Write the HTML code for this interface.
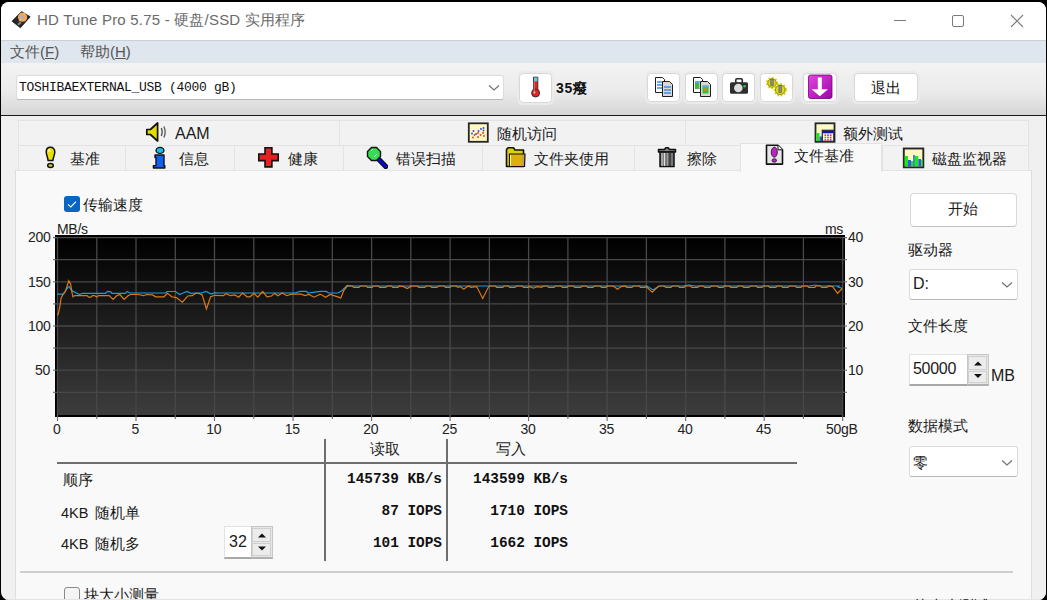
<!DOCTYPE html>
<html><head><meta charset="utf-8">
<style>
*{margin:0;padding:0;box-sizing:border-box}
html,body{width:1047px;height:600px;overflow:hidden;background:#000;font-family:"Liberation Sans",sans-serif}
.a{position:absolute}
#win{position:absolute;left:1px;top:2px;width:1045px;height:598px;background:#f0f0f0;border-radius:8px;overflow:hidden}
#in{position:absolute;left:-1px;top:-2px;width:1047px;height:600px}
.t{position:absolute;white-space:nowrap;font-size:15px;color:#1a1a1a;line-height:1}
.btn{position:absolute;background:#fff;border:1px solid #d8d8d8;border-radius:4px;box-shadow:0 0 0 2px #ebebeb}
.tab{position:absolute;background:#f2f2f2;border:1px solid #e3e3e3}
.combo{position:absolute;background:#fff;border:1px solid #dcdcdc;border-bottom-color:#b8b8b8;border-radius:3px}
.mono{position:absolute;white-space:nowrap;font-family:"Liberation Mono",monospace;font-weight:bold;font-size:14.4px;color:#111;line-height:1;text-align:right}
.ax{position:absolute;white-space:nowrap;font-size:14px;letter-spacing:-0.3px;color:#222;line-height:1}
</style></head><body>
<div id="win"><div id="in">
 <!-- title bar -->
 <div class="a" style="left:0;top:0;width:1047px;height:40px;background:#fff"></div>
 <svg class="a" style="left:11px;top:10px" width="21" height="20" viewBox="0 0 21 20">
  <path d="M10.6 1.6 L19.2 6.8 L9.4 17.8 L1 11.2 Z" fill="#262626" stroke="#1a1a1a" stroke-width="0.8" stroke-linejoin="round"/>
  <circle cx="11.6" cy="7.2" r="4.6" fill="#f0a85a"/>
  <circle cx="11.3" cy="7.4" r="1.6" fill="#a8b0c8"/>
  <path d="M8 11.5 L10.5 8.5" stroke="#ccc" stroke-width="1"/>
  <rect x="6.5" y="12.5" width="4" height="2" fill="#888" transform="rotate(-40 8.5 13.5)"/>
 </svg>
 <div class="t" style="left:37px;top:12px;font-size:15px;color:#6a6a6a;letter-spacing:0.2px">HD Tune Pro 5.75 - 硬盘/SSD 实用程序</div>
 <div class="a" style="left:894px;top:20px;width:12px;height:1px;background:#7a7a7a"></div>
 <div class="a" style="left:952px;top:15px;width:12px;height:12px;border:1px solid #7a7a7a;border-radius:2px"></div>
 <svg class="a" style="left:1010px;top:14px" width="14" height="14"><path d="M1 1L13 13M13 1L1 13" stroke="#7a7a7a" stroke-width="1.1"/></svg>
 <!-- menu -->
 <div class="a" style="left:0;top:40px;width:1047px;height:23px;background:#dfe6ee;border-top:1px solid #c8d0da"></div>
 <div class="t" style="left:10px;top:44px;color:#555">文件(<u>F</u>)</div>
 <div class="t" style="left:80px;top:44px;color:#555">帮助(<u>H</u>)</div>
 <!-- toolbar -->
 <div class="a" style="left:0;top:63px;width:1047px;height:52px;background:linear-gradient(#f3f3f3,#ebebeb 55%,#d6d6d6)"></div>
 <div class="a" style="left:0;top:115px;width:1047px;height:1px;background:#1c1c1c"></div>
 <div class="combo" style="left:16px;top:75px;width:488px;height:25px"></div>
 <div class="t" style="left:19px;top:81px;font-family:'Liberation Mono',monospace;font-size:13px;color:#111;letter-spacing:-0.3px">TOSHIBAEXTERNAL_USB (4000 gB)</div>
 <svg class="a" style="left:488px;top:84px" width="12" height="8"><path d="M1 1.5L6 6L11 1.5" stroke="#707070" fill="none" stroke-width="1.1"/></svg>
 <div class="btn" style="left:519px;top:73px;width:33px;height:30px"></div>
 <svg class="a" style="left:527px;top:75px" width="16" height="24" viewBox="0 0 16 24">
  <path d="M6.5 2.2h4.3v13.5h-4.3z" fill="#e02424" stroke="#2a2a2a" stroke-width="0.9"/>
  <rect x="7" y="2.6" width="3.4" height="3.8" fill="#5ad0f0"/>
  <circle cx="8.6" cy="18" r="4" fill="#e02424" stroke="#2a2a2a" stroke-width="0.9"/>
  <path d="M7.2 6.5v10" stroke="#ff8080" stroke-width="0.8"/>
  <circle cx="7.4" cy="17.6" r="1" fill="#ffd0d0"/>
 </svg>
 <div class="t" style="left:556px;top:81px;font-weight:bold;font-size:14px;color:#111;letter-spacing:0.8px">35癈</div>
 <div class="btn" style="left:647px;top:73px;width:33px;height:29px"></div>
 <div class="btn" style="left:685px;top:73px;width:33px;height:29px"></div>
 <div class="btn" style="left:722px;top:73px;width:33px;height:29px"></div>
 <div class="btn" style="left:760px;top:73px;width:33px;height:29px"></div>
 <div class="btn" style="left:803px;top:73px;width:34px;height:29px"></div>
 <div class="btn" style="left:854px;top:73px;width:64px;height:29px"></div>
 <div class="t" style="left:871px;top:80px;color:#111">退出</div>
 <svg class="a" style="left:654px;top:76px" width="22" height="22" viewBox="0 0 22 22">
  <path d="M1.5 1.5h7l2 2v13h-9z" fill="#fff" stroke="#1e1e1e"/><path d="M3 6h5M3 9h5M3 12h5" stroke="#3a8ee6" stroke-width="1.3"/>
  <path d="M8.5 5.5h7l3 3v12h-10z" fill="#d8d8d8" stroke="#1e1e1e"/><path d="M10 11h7M10 14h7M10 17h7" stroke="#3a8ee6" stroke-width="1.3"/>
 </svg>
 <svg class="a" style="left:692px;top:76px" width="22" height="22" viewBox="0 0 22 22">
  <path d="M1.5 1.5h7l2 2v13h-9z" fill="#fff" stroke="#1e1e1e"/><rect x="3" y="5" width="4.5" height="8" fill="#3dbb3d"/><rect x="3" y="5" width="4.5" height="2" fill="#55aaff"/>
  <path d="M8.5 5.5h7l3 3v12h-10z" fill="#d8d8d8" stroke="#1e1e1e"/><rect x="10.5" y="9.5" width="6" height="8" fill="#3dbb3d"/><rect x="10.5" y="9.5" width="6" height="2" fill="#55aaff"/><circle cx="13.5" cy="13.5" r="1.6" fill="#e88a00"/>
 </svg>
 <svg class="a" style="left:728px;top:77px" width="22" height="19" viewBox="0 0 22 19">
  <rect x="7.8" y="1.8" width="6.5" height="4.5" rx="1.2" fill="none" stroke="#2a2a2a" stroke-width="1.6"/>
  <rect x="2" y="5.3" width="18" height="11.5" rx="1.5" fill="#2e2e2e"/>
  <circle cx="10.3" cy="11" r="4.3" fill="#dcdcdc"/><circle cx="16.6" cy="9.3" r="1.3" fill="#22cc44"/>
 </svg>
 <svg class="a" style="left:764px;top:75px" width="24" height="24" viewBox="0 0 24 24">
  <circle cx="8" cy="8" r="4.6" fill="#d8d400" stroke="#d8d400" stroke-width="3" stroke-dasharray="1.6 1.4"/>
  <circle cx="8" cy="8" r="4.2" fill="#e0dc10" stroke="#7a7420" stroke-width="0.7"/>
  <circle cx="16.2" cy="14.8" r="5.2" fill="#d8d400" stroke="#d8d400" stroke-width="3" stroke-dasharray="1.6 1.4"/>
  <circle cx="16.2" cy="14.8" r="4.8" fill="#e0dc10" stroke="#7a7420" stroke-width="0.7"/>
  <path d="M6.6 4h2.8v6.5h-2.8z" fill="#8a8a8a" stroke="#555" stroke-width="0.5"/>
  <path d="M14.8 10.5h2.8v7h-2.8z" fill="#8a8a8a" stroke="#555" stroke-width="0.5"/>
 </svg>
 <svg class="a" style="left:807px;top:74px" width="26" height="26" viewBox="0 0 26 26">
  <defs><linearGradient id="pg" x1="0" y1="0" x2="1" y2="1"><stop offset="0" stop-color="#e048e0"/><stop offset="1" stop-color="#a000a8"/></linearGradient></defs>
  <rect x="1.5" y="1" width="23.5" height="23.5" rx="2" fill="url(#pg)" stroke="#7a007a" stroke-width="0.8"/>
  <path d="M12.8 3.5v12" stroke="#fff" stroke-width="4"/>
  <path d="M4.6 15.2h16.4l-8.2 7z" fill="#fff"/>
 </svg>

 <!-- tabs area -->
 <div class="a" style="left:15px;top:170px;width:1017px;height:440px;background:#f9f9f9;border:1px solid #dedede"></div>
 <div class="tab" style="left:18px;top:120px;width:322px;height:26px"></div>
 <div class="tab" style="left:339px;top:120px;width:347px;height:26px"></div>
 <div class="tab" style="left:685px;top:120px;width:344px;height:26px"></div>
 <div class="tab" style="left:18px;top:145px;width:108px;height:26px"></div>
 <div class="tab" style="left:125px;top:145px;width:110px;height:26px"></div>
 <div class="tab" style="left:234px;top:145px;width:110px;height:26px"></div>
 <div class="tab" style="left:343px;top:145px;width:140px;height:26px"></div>
 <div class="tab" style="left:482px;top:145px;width:153px;height:26px"></div>
 <div class="tab" style="left:634px;top:145px;width:107px;height:26px"></div>
 <div class="tab" style="left:882px;top:145px;width:147px;height:26px"></div>
 <div class="a" style="left:740px;top:143px;width:142px;height:29px;background:#f9f9f9;border:1px solid #e2e2e2;border-bottom:none"></div>

 <div class="t" style="left:175px;top:126px;font-size:16px">AAM</div>
 <div class="t" style="left:497px;top:126px">随机访问</div>
 <div class="t" style="left:843px;top:126px">额外测试</div>
 <div class="t" style="left:70px;top:151px">基准</div>
 <div class="t" style="left:179px;top:151px">信息</div>
 <div class="t" style="left:288px;top:151px">健康</div>
 <div class="t" style="left:396px;top:151px">错误扫描</div>
 <div class="t" style="left:534px;top:151px">文件夹使用</div>
 <div class="t" style="left:687px;top:151px">擦除</div>
 <div class="t" style="left:794px;top:148px">文件基准</div>
 <div class="t" style="left:932px;top:151px">磁盘监视器</div>

 <!-- tab icons -->
 <svg class="a" style="left:145px;top:121px" width="23" height="22" viewBox="0 0 23 22">
  <path d="M1.8 8.5h3.6l7.2-6.5v18l-7.2-6.5H1.8z" fill="#e6dc00" stroke="#111" stroke-width="1.7" stroke-linejoin="round"/>
  <path d="M16.3 7q1.8 4 0 8M18.8 5.5q2.8 5.5 0 11" stroke="#555" stroke-width="1.3" fill="none"/>
 </svg>
 <svg class="a" style="left:467px;top:122px" width="22" height="21" viewBox="0 0 22 21">
  <rect x="1.8" y="1.3" width="19" height="18.5" fill="#fff8c0" stroke="#262626" stroke-width="1.8"/>
  <circle cx="7.5" cy="13" r="1" fill="#f04030"/><circle cx="6" cy="15.5" r="1" fill="#f04030"/><circle cx="11" cy="15" r="1" fill="#f04030"/><circle cx="13.5" cy="13" r="1" fill="#f04030"/><circle cx="16" cy="11" r="1" fill="#f04030"/><circle cx="17" cy="14" r="1" fill="#f04030"/><circle cx="11" cy="11" r="1" fill="#f04030"/>
  <circle cx="5" cy="11.5" r="1" fill="#3050f0"/><circle cx="6.5" cy="9" r="1" fill="#3050f0"/><circle cx="9" cy="12" r="1" fill="#3050f0"/><circle cx="11.5" cy="9" r="1" fill="#3050f0"/><circle cx="14" cy="7" r="1" fill="#3050f0"/><circle cx="16.5" cy="6" r="1" fill="#3050f0"/><circle cx="16.5" cy="8.5" r="1" fill="#3050f0"/>
 </svg>
 <svg class="a" style="left:814px;top:122px" width="22" height="21" viewBox="0 0 22 21">
  <rect x="1.5" y="1.3" width="19" height="18.5" fill="#fff8c8" stroke="#262626" stroke-width="1.8"/>
  <rect x="2.5" y="11" width="3" height="8" fill="#10ee10"/><rect x="5.5" y="14.5" width="3" height="4.5" fill="#4050e8"/>
  <rect x="8.3" y="8.3" width="11.5" height="11" fill="#f8f8f0" stroke="#222" stroke-width="1.2"/>
  <rect x="9" y="9" width="10.5" height="2.3" fill="#1010c8"/>
  <circle cx="11.3" cy="13.2" r="0.9" fill="#f03030"/><circle cx="14" cy="13.2" r="0.9" fill="#3050f0"/><circle cx="16.7" cy="13.2" r="0.9" fill="#f03030"/>
  <circle cx="11.3" cy="15.5" r="0.9" fill="#30c030"/><circle cx="14" cy="15.5" r="0.9" fill="#f03030"/><circle cx="16.7" cy="15.5" r="0.9" fill="#f03030"/>
  <circle cx="11.3" cy="17.8" r="0.9" fill="#f03030"/><circle cx="14" cy="17.8" r="0.9" fill="#f03030"/><circle cx="16.7" cy="17.8" r="0.9" fill="#3050f0"/>
 </svg>
 <svg class="a" style="left:45px;top:146px" width="12" height="23" viewBox="0 0 12 23">
  <path d="M5.5 1.3C3 1.3 1.2 3 1.2 6C1.2 8.5 2.6 10.5 3.1 14.4h4.8C8.4 10.5 9.8 8.5 9.8 6C9.8 3 8 1.3 5.5 1.3z" fill="#e8e000" stroke="#111" stroke-width="1.5"/>
  <ellipse cx="5.5" cy="19.5" rx="2.8" ry="2" fill="#d8d000" stroke="#111" stroke-width="1.5"/>
  <ellipse cx="4.2" cy="4.5" rx="1.2" ry="1.6" fill="#fffaa0"/>
 </svg>
 <svg class="a" style="left:152px;top:146px" width="14" height="23" viewBox="0 0 14 23">
  <ellipse cx="8" cy="4.4" rx="3.9" ry="3" fill="#10c0f0" stroke="#111" stroke-width="1.4"/>
  <path d="M3 9H12V19.6H12.8V22H1.4V19.6H4V11.5H3Z" fill="#1060f0" stroke="#111" stroke-width="1.4" stroke-linejoin="round"/>
 </svg>
 <svg class="a" style="left:258px;top:147px" width="22" height="21" viewBox="0 0 22 21">
  <path d="M7 0.8H13.9V7H20.2V13.6H13.9V19.9H7V13.6H0.8V7H7Z" fill="#e42222" stroke="#111" stroke-width="1.6"/>
 </svg>
 <svg class="a" style="left:366px;top:146px" width="22" height="23" viewBox="0 0 22 23">
  <path d="M12.5 13l7.2 7.5" stroke="#111" stroke-width="5.2" stroke-linecap="round"/>
  <path d="M12.5 13l7.2 7.5" stroke="#0a0ad0" stroke-width="3" stroke-linecap="round"/>
  <path d="M5.5 1.5h5l4 4v5l-4 4h-5l-4-4v-5z" fill="#36dd50" stroke="#111" stroke-width="1.4"/>
  <path d="M5 5l2-2M8 11l3-3" stroke="#b8ffc0" stroke-width="1"/>
 </svg>
 <svg class="a" style="left:505px;top:146px" width="22" height="23" viewBox="0 0 22 23">
  <path d="M1.5 3.5L3 1.8h5.5L10 4h8.5v16.5H1.5z" fill="#e0d000" stroke="#111" stroke-width="1.6" stroke-linejoin="round"/>
  <path d="M4.5 8h15.5l-0.5 12.5H4.5z" fill="#dcae10" stroke="#111" stroke-width="1.2"/>
  <path d="M5.5 9v11" stroke="#fff6a0" stroke-width="1"/><path d="M17.8 9v11" stroke="#9a9a9a" stroke-width="0.8"/>
 </svg>
 <svg class="a" style="left:657px;top:146px" width="20" height="23" viewBox="0 0 20 23">
  <path d="M1.5 3.5h6l1.3-1.8h2.4l1.3 1.8h6v2.5h-17z" fill="#888" stroke="#111" stroke-width="1.5" stroke-linejoin="round"/>
  <path d="M3 6h14v14.5H3z" fill="#6a6a6a" stroke="#111" stroke-width="1.5"/>
  <path d="M5 7v13" stroke="#c8c8c8" stroke-width="1.2"/><path d="M7.5 7v13" stroke="#e0e0e0" stroke-width="1.4"/><path d="M10.3 7v13" stroke="#a8a8a8" stroke-width="1"/><path d="M13 7v13" stroke="#2a2a2a" stroke-width="1.2"/><path d="M15 7v13" stroke="#888" stroke-width="1"/>
 </svg>
 <svg class="a" style="left:765px;top:144px" width="20" height="22" viewBox="0 0 20 22">
  <path d="M1.5 1.3h11.5l4.5 4.5v14.3H1.5z" fill="#e6e6e6" stroke="#111" stroke-width="1.6" stroke-linejoin="round"/>
  <path d="M13 1.3v4.5h4.5" fill="#fff" stroke="#111" stroke-width="1"/>
  <ellipse cx="9.3" cy="8.2" rx="3" ry="5" fill="#c020c8" stroke="#222" stroke-width="0.9"/>
  <ellipse cx="9.3" cy="16.5" rx="2.3" ry="1.7" fill="#c020c8" stroke="#222" stroke-width="0.9"/>
 </svg>
 <svg class="a" style="left:902px;top:147px" width="23" height="22" viewBox="0 0 23 22">
  <rect x="1.8" y="1.5" width="19.5" height="18.8" fill="#fff8c0" stroke="#262626" stroke-width="1.9"/>
  <rect x="2.8" y="9" width="3.2" height="10.3" fill="#10f010"/><rect x="6" y="13" width="3" height="6.3" fill="#4050f0"/>
  <rect x="9" y="14" width="2.2" height="5.3" fill="#10f010"/><rect x="11.2" y="8" width="1.6" height="11.3" fill="#4050f0"/>
  <rect x="12.8" y="9" width="3.5" height="10.3" fill="#10f010"/><rect x="16.3" y="12" width="2.8" height="7.3" fill="#4050f0"/>
  <rect x="19.1" y="13" width="1.4" height="6.3" fill="#10f010"/>
 </svg>
 <!-- checkbox -->
 <div class="a" style="left:64px;top:196px;width:16px;height:16px;background:#0a64c2;border-radius:3px"></div>
 <svg class="a" style="left:64px;top:196px" width="16" height="16"><path d="M4 8.3L6.8 11L12 5.6" stroke="#fff" stroke-width="1.1" fill="none"/></svg>
 <div class="t" style="left:83px;top:197px">传输速度</div>

 <!-- chart -->
 <div class="ax" style="left:57px;top:222px">MB/s</div>
 <div class="ax" style="left:825px;top:222px">ms</div>
 <div class="ax" style="left:28px;top:230px">200</div>
 <div class="ax" style="left:28px;top:275px">150</div>
 <div class="ax" style="left:28px;top:319px">100</div>
 <div class="ax" style="left:35px;top:363px">50</div>
 <div class="ax" style="left:848px;top:230px">40</div>
 <div class="ax" style="left:848px;top:275px">30</div>
 <div class="ax" style="left:848px;top:319px">20</div>
 <div class="ax" style="left:848px;top:363px">10</div>
 <svg class="a" style="left:0;top:0" width="1047" height="600">
  <defs><linearGradient id="cg" x1="0" y1="0" x2="0" y2="1"><stop offset="0" stop-color="#000"/><stop offset="1" stop-color="#3d3d3d"/></linearGradient></defs>
  <rect x="55" y="235" width="790" height="182" fill="#000"/>
  <rect x="57" y="237" width="786" height="178" fill="url(#cg)"/>
  <line x1="57.5" y1="237" x2="57.5" y2="415" stroke="#484848" stroke-width="1.3"/>
  <line x1="96.8" y1="237" x2="96.8" y2="415" stroke="#484848" stroke-width="1.3"/>
  <line x1="136.0" y1="237" x2="136.0" y2="415" stroke="#484848" stroke-width="1.3"/>
  <line x1="175.3" y1="237" x2="175.3" y2="415" stroke="#484848" stroke-width="1.3"/>
  <line x1="214.5" y1="237" x2="214.5" y2="415" stroke="#484848" stroke-width="1.3"/>
  <line x1="253.8" y1="237" x2="253.8" y2="415" stroke="#484848" stroke-width="1.3"/>
  <line x1="293.1" y1="237" x2="293.1" y2="415" stroke="#484848" stroke-width="1.3"/>
  <line x1="332.3" y1="237" x2="332.3" y2="415" stroke="#484848" stroke-width="1.3"/>
  <line x1="371.6" y1="237" x2="371.6" y2="415" stroke="#484848" stroke-width="1.3"/>
  <line x1="410.8" y1="237" x2="410.8" y2="415" stroke="#484848" stroke-width="1.3"/>
  <line x1="450.1" y1="237" x2="450.1" y2="415" stroke="#484848" stroke-width="1.3"/>
  <line x1="489.4" y1="237" x2="489.4" y2="415" stroke="#484848" stroke-width="1.3"/>
  <line x1="528.6" y1="237" x2="528.6" y2="415" stroke="#484848" stroke-width="1.3"/>
  <line x1="567.9" y1="237" x2="567.9" y2="415" stroke="#484848" stroke-width="1.3"/>
  <line x1="607.1" y1="237" x2="607.1" y2="415" stroke="#484848" stroke-width="1.3"/>
  <line x1="646.4" y1="237" x2="646.4" y2="415" stroke="#484848" stroke-width="1.3"/>
  <line x1="685.7" y1="237" x2="685.7" y2="415" stroke="#484848" stroke-width="1.3"/>
  <line x1="724.9" y1="237" x2="724.9" y2="415" stroke="#484848" stroke-width="1.3"/>
  <line x1="764.2" y1="237" x2="764.2" y2="415" stroke="#484848" stroke-width="1.3"/>
  <line x1="803.4" y1="237" x2="803.4" y2="415" stroke="#484848" stroke-width="1.3"/>
  <line x1="842.7" y1="237" x2="842.7" y2="415" stroke="#484848" stroke-width="1.3"/>
  <line x1="57" y1="237.6" x2="843" y2="237.6" stroke="#484848" stroke-width="1.3"/>
  <line x1="57" y1="259.7" x2="843" y2="259.7" stroke="#484848" stroke-width="1.3"/>
  <line x1="57" y1="281.8" x2="843" y2="281.8" stroke="#484848" stroke-width="1.3"/>
  <line x1="57" y1="303.9" x2="843" y2="303.9" stroke="#484848" stroke-width="1.3"/>
  <line x1="57" y1="326.0" x2="843" y2="326.0" stroke="#484848" stroke-width="1.3"/>
  <line x1="57" y1="348.1" x2="843" y2="348.1" stroke="#484848" stroke-width="1.3"/>
  <line x1="57" y1="370.2" x2="843" y2="370.2" stroke="#484848" stroke-width="1.3"/>
  <line x1="57" y1="392.3" x2="843" y2="392.3" stroke="#484848" stroke-width="1.3"/>
  <polyline points="57.3,294.1 62.3,294.1 64.2,292.6 67.2,288.4 69.1,286.5 71.0,289.5 73.0,291.4 76.4,293.0 79.4,294.5 82.5,293.3 105.4,293.3 107.7,291.4 110.8,291.8 111.9,293.3 125.3,293.3 127.2,291.4 129.9,293.0 165.6,293.0 167.1,291.5 175.5,291.5 179.7,294.5 183.1,293.0 187.0,291.5 190.8,293.4 194.6,293.0 201.5,293.0 206.0,291.5 211.4,294.1 215.0,292.6 218.0,293.0 295.0,293.0 300.3,291.4 306.5,291.4 308.0,293.0 320.2,291.4 326.3,291.4 328.6,293.0 337.8,293.0 341.6,291.0 347.0,285.6 353.0,286.0 359.0,286.0 365.0,286.0 371.0,286.0 377.0,286.0 383.0,286.0 389.0,286.0 395.0,286.0 401.0,286.0 407.0,286.0 413.0,286.0 419.0,286.0 425.0,286.0 431.0,286.0 437.0,286.0 443.0,286.0 449.0,286.0 455.0,286.0 461.0,286.0 467.0,286.0 473.0,286.0 479.0,286.0 485.0,286.0 491.0,286.0 497.0,286.0 503.0,286.0 509.0,286.0 515.0,286.0 521.0,286.0 527.0,286.0 533.0,286.0 539.0,286.0 545.0,286.0 551.0,286.0 557.0,286.0 563.0,286.0 569.0,286.0 575.0,286.0 581.0,286.0 587.0,286.0 593.0,286.0 599.0,286.0 605.0,286.0 611.0,286.0 617.0,286.0 623.0,286.0 629.0,286.0 635.0,286.0 641.0,286.0 647.0,286.0 653.0,289.9 659.0,286.0 665.0,286.0 671.0,286.0 677.0,286.0 683.0,286.0 689.0,285.0 695.0,286.0 701.0,286.0 707.0,286.0 713.0,286.0 719.0,286.0 725.0,286.0 731.0,286.0 737.0,286.0 743.0,286.0 749.0,286.0 755.0,286.0 761.0,286.0 767.0,286.0 773.0,286.0 779.0,286.0 785.0,286.0 791.0,286.0 797.0,286.0 803.0,286.0 809.0,286.0 815.0,285.0 821.0,286.0 827.0,286.0 833.0,286.0 839.0,286.0 838.0,287.0 842.2,288.3" fill="none" stroke="#1a9ed8" stroke-width="1.2"/>
  <polyline points="57.7,315.5 58.8,311.7 60.0,305.6 61.1,297.9 62.6,295.2 65.3,291.8 67.2,285.7 68.8,280.7 70.7,284.2 71.8,291.8 73.0,296.8 74.9,295.6 87.1,295.6 88.6,297.2 90.9,297.2 92.4,295.6 94.7,295.6 96.6,297.2 98.5,295.6 109.2,295.6 113.1,299.4 116.9,295.6 119.9,294.5 124.1,299.4 128.3,295.6 130.6,294.5 135.0,294.5 138.0,294.5 143.4,295.7 146.5,294.5 152.6,294.9 155.6,296.8 164.0,296.8 167.5,293.4 171.7,296.8 176.3,297.6 182.4,302.2 187.7,296.0 192.3,295.7 195.4,293.4 199.2,293.4 202.2,294.9 206.4,309.0 210.6,296.8 215.0,295.3 223.4,295.7 226.1,293.8 230.3,295.7 234.9,294.9 238.7,297.2 242.5,293.0 247.1,296.8 250.1,296.8 254.0,293.4 257.8,297.2 262.7,291.5 267.0,296.8 271.5,296.0 274.6,293.4 278.0,295.7 282.2,293.0 286.8,295.7 291.4,294.1 301.1,294.1 304.9,295.6 308.8,294.5 314.1,297.2 320.2,294.1 325.6,297.2 330.1,294.5 336.3,296.4 340.8,297.9 343.9,290.3 347.7,285.6 348.0,286.0 352.5,286.0 353.7,287.3 359.0,287.3 360.2,286.0 366.3,286.0 367.5,287.3 372.0,287.3 373.2,286.0 378.5,286.0 379.7,287.3 385.8,287.3 387.0,286.0 391.5,286.0 392.7,287.3 398.0,287.3 399.2,286.0 403.6,286.6 407.1,288.5 410.6,286.6 412.2,286.0 417.5,286.0 418.7,287.3 424.8,287.3 426.0,286.0 430.5,286.0 431.7,287.3 437.0,287.3 438.2,286.0 444.3,286.0 445.5,287.3 450.0,287.3 451.2,286.0 456.5,286.0 457.7,287.3 460.3,286.6 463.8,289.3 467.3,286.6 469.5,286.0 470.7,287.3 476.7,286.6 482.7,298.5 488.7,286.6 490.2,286.0 495.5,286.0 496.7,287.3 502.8,287.3 504.0,286.0 508.5,286.0 509.7,287.3 515.0,287.3 516.2,286.0 522.3,286.0 523.5,287.3 528.0,287.3 529.9,286.6 533.4,288.2 536.9,286.6 541.8,287.3 543.0,286.0 547.5,286.0 548.7,287.3 554.0,287.3 555.2,286.0 561.3,286.0 562.5,287.3 567.0,287.3 568.2,286.0 573.5,286.0 574.7,287.3 580.8,287.3 582.0,286.0 586.5,286.0 587.7,287.3 593.0,287.3 594.2,286.0 600.3,286.0 601.5,287.3 606.0,287.3 607.2,286.0 612.5,286.0 614.0,286.6 617.5,289.3 621.0,286.6 625.5,286.0 626.7,287.3 632.0,287.3 633.2,286.0 639.3,286.0 640.5,287.3 645.0,287.3 646.2,286.6 652.2,292.2 658.2,286.6 660.0,286.0 664.5,286.0 665.7,287.3 671.0,287.3 672.2,286.0 678.3,286.0 679.5,287.3 684.0,287.3 685.2,286.0 690.5,286.0 691.7,287.3 697.8,287.3 699.0,286.0 703.5,286.0 704.7,287.3 710.0,287.3 711.2,286.0 717.3,286.0 718.5,287.3 723.0,287.3 724.2,286.0 729.5,286.0 730.7,287.3 736.8,287.3 738.0,286.0 742.5,286.0 743.7,287.3 749.0,287.3 750.2,286.0 756.3,286.0 757.5,287.3 762.0,287.3 763.2,286.0 768.5,286.0 769.7,287.3 775.8,287.3 777.0,286.0 781.5,286.0 782.7,287.3 788.0,287.3 789.2,286.0 795.3,286.0 796.5,287.3 801.0,287.3 802.2,286.0 807.5,286.0 808.7,287.3 814.8,287.3 816.0,286.0 820.5,286.0 821.7,287.3 827.0,287.3 828.2,286.0 832.6,286.6 837.6,293.3 842.2,288.5" fill="none" stroke="#dc7814" stroke-width="1.2"/>
  <line x1="53" y1="237.6" x2="57" y2="237.6" stroke="#6a6a6a" stroke-width="1.1"/>
  <line x1="843" y1="237.6" x2="847" y2="237.6" stroke="#6a6a6a" stroke-width="1.1"/>
  <line x1="53" y1="259.7" x2="57" y2="259.7" stroke="#6a6a6a" stroke-width="1.1"/>
  <line x1="843" y1="259.7" x2="847" y2="259.7" stroke="#6a6a6a" stroke-width="1.1"/>
  <line x1="53" y1="281.8" x2="57" y2="281.8" stroke="#6a6a6a" stroke-width="1.1"/>
  <line x1="843" y1="281.8" x2="847" y2="281.8" stroke="#6a6a6a" stroke-width="1.1"/>
  <line x1="53" y1="303.9" x2="57" y2="303.9" stroke="#6a6a6a" stroke-width="1.1"/>
  <line x1="843" y1="303.9" x2="847" y2="303.9" stroke="#6a6a6a" stroke-width="1.1"/>
  <line x1="53" y1="326.0" x2="57" y2="326.0" stroke="#6a6a6a" stroke-width="1.1"/>
  <line x1="843" y1="326.0" x2="847" y2="326.0" stroke="#6a6a6a" stroke-width="1.1"/>
  <line x1="53" y1="348.1" x2="57" y2="348.1" stroke="#6a6a6a" stroke-width="1.1"/>
  <line x1="843" y1="348.1" x2="847" y2="348.1" stroke="#6a6a6a" stroke-width="1.1"/>
  <line x1="53" y1="370.2" x2="57" y2="370.2" stroke="#6a6a6a" stroke-width="1.1"/>
  <line x1="843" y1="370.2" x2="847" y2="370.2" stroke="#6a6a6a" stroke-width="1.1"/>
  <line x1="53" y1="392.3" x2="57" y2="392.3" stroke="#6a6a6a" stroke-width="1.1"/>
  <line x1="843" y1="392.3" x2="847" y2="392.3" stroke="#6a6a6a" stroke-width="1.1"/>
  <line x1="57.5" y1="415" x2="57.5" y2="421" stroke="#6a6a6a" stroke-width="1.1"/>
  <line x1="96.8" y1="415" x2="96.8" y2="419" stroke="#6a6a6a" stroke-width="1.1"/>
  <line x1="136.0" y1="415" x2="136.0" y2="421" stroke="#6a6a6a" stroke-width="1.1"/>
  <line x1="175.3" y1="415" x2="175.3" y2="419" stroke="#6a6a6a" stroke-width="1.1"/>
  <line x1="214.5" y1="415" x2="214.5" y2="421" stroke="#6a6a6a" stroke-width="1.1"/>
  <line x1="253.8" y1="415" x2="253.8" y2="419" stroke="#6a6a6a" stroke-width="1.1"/>
  <line x1="293.1" y1="415" x2="293.1" y2="421" stroke="#6a6a6a" stroke-width="1.1"/>
  <line x1="332.3" y1="415" x2="332.3" y2="419" stroke="#6a6a6a" stroke-width="1.1"/>
  <line x1="371.6" y1="415" x2="371.6" y2="421" stroke="#6a6a6a" stroke-width="1.1"/>
  <line x1="410.8" y1="415" x2="410.8" y2="419" stroke="#6a6a6a" stroke-width="1.1"/>
  <line x1="450.1" y1="415" x2="450.1" y2="421" stroke="#6a6a6a" stroke-width="1.1"/>
  <line x1="489.4" y1="415" x2="489.4" y2="419" stroke="#6a6a6a" stroke-width="1.1"/>
  <line x1="528.6" y1="415" x2="528.6" y2="421" stroke="#6a6a6a" stroke-width="1.1"/>
  <line x1="567.9" y1="415" x2="567.9" y2="419" stroke="#6a6a6a" stroke-width="1.1"/>
  <line x1="607.1" y1="415" x2="607.1" y2="421" stroke="#6a6a6a" stroke-width="1.1"/>
  <line x1="646.4" y1="415" x2="646.4" y2="419" stroke="#6a6a6a" stroke-width="1.1"/>
  <line x1="685.7" y1="415" x2="685.7" y2="421" stroke="#6a6a6a" stroke-width="1.1"/>
  <line x1="724.9" y1="415" x2="724.9" y2="419" stroke="#6a6a6a" stroke-width="1.1"/>
  <line x1="764.2" y1="415" x2="764.2" y2="421" stroke="#6a6a6a" stroke-width="1.1"/>
  <line x1="803.4" y1="415" x2="803.4" y2="419" stroke="#6a6a6a" stroke-width="1.1"/>
  <line x1="842.7" y1="415" x2="842.7" y2="421" stroke="#6a6a6a" stroke-width="1.1"/>
 </svg>
 <div class="ax" style="left:52.9px;top:422px">0</div>
 <div class="ax" style="left:131.4px;top:422px">5</div>
 <div class="ax" style="left:206.3px;top:422px">10</div>
 <div class="ax" style="left:284.8px;top:422px">15</div>
 <div class="ax" style="left:363.3px;top:422px">20</div>
 <div class="ax" style="left:441.9px;top:422px">25</div>
 <div class="ax" style="left:520.4px;top:422px">30</div>
 <div class="ax" style="left:598.9px;top:422px">35</div>
 <div class="ax" style="left:677.4px;top:422px">40</div>
 <div class="ax" style="left:755.9px;top:422px">45</div>
 <div class="ax" style="left:826px;top:422px">50gB</div>

 <!-- table -->
 <div class="a" style="left:324px;top:439px;width:2px;height:122px;background:#6e6e6e"></div>
 <div class="a" style="left:446px;top:439px;width:2px;height:122px;background:#6e6e6e"></div>
 <div class="a" style="left:57px;top:462px;width:740px;height:2px;background:#6e6e6e"></div>
 <div class="t" style="left:370px;top:442px;font-size:14.5px">读取</div>
 <div class="t" style="left:496px;top:442px;font-size:14.5px">写入</div>
 <div class="t" style="left:63px;top:473px;font-size:14.5px">顺序</div>
 <div class="t" style="left:61px;top:506px;font-size:14.5px">4KB <span style="margin-left:3px">随机单</span></div>
 <div class="t" style="left:61px;top:537px;font-size:14.5px">4KB <span style="margin-left:3px">随机多</span></div>
 <div class="mono" style="right:605px;top:472px">145739 KB/s</div>
 <div class="mono" style="right:479px;top:472px">143599 KB/s</div>
 <div class="mono" style="right:605px;top:504px">87 IOPS</div>
 <div class="mono" style="right:479px;top:504px">1710 IOPS</div>
 <div class="mono" style="right:605px;top:536px">101 IOPS</div>
 <div class="mono" style="right:479px;top:536px">1662 IOPS</div>
 <!-- spinner 32 -->
 <div class="a" style="left:224px;top:526px;width:49px;height:33px;background:#fff;border:1px solid #e2e2e2;border-bottom:2px solid #a8a8a8"></div>
 <div class="t" style="left:229px;top:534px;font-size:16px">32</div>
 <div class="a" style="left:251px;top:526px;width:22px;height:33px;background:#e6e6e6;border:1px solid #c6c6c6;border-bottom:2px solid #b0b0b0"></div>
 <div class="a" style="left:252px;top:528px;width:19px;height:14px;background:#ececec;border:1px solid #d0d0d0"></div>
 <div class="a" style="left:252px;top:543px;width:19px;height:13px;background:#ececec;border:1px solid #d0d0d0"></div>
 <svg class="a" style="left:258px;top:533px" width="8" height="19"><path d="M0 4.5L4 0.5L8 4.5z" fill="#111"/><path d="M0 13.5L4 17.5L8 13.5z" fill="#111"/></svg>
 <div class="a" style="left:20px;top:571px;width:993px;height:2px;background:#cecece"></div>
 <div class="a" style="left:64px;top:587px;width:16px;height:16px;background:#f4f4f4;border:1px solid #8a8a8a;border-radius:3px"></div>
 <div class="t" style="left:84px;top:587px">块大小测量</div>

 <!-- right panel -->
 <div class="btn" style="left:910px;top:193px;width:107px;height:34px;box-shadow:none;border-color:#d9d9d9;border-bottom-color:#c2c2c2"></div>
 <div class="t" style="left:948px;top:201px">开始</div>
 <div class="t" style="left:908px;top:242px">驱动器</div>
 <div class="combo" style="left:909px;top:269px;width:109px;height:31px"></div>
 <div class="t" style="left:913px;top:276px;font-size:16px">D:</div>
 <svg class="a" style="left:1001px;top:281px" width="12" height="8"><path d="M1 1.5L6 6L11 1.5" stroke="#707070" fill="none" stroke-width="1.1"/></svg>
 <div class="t" style="left:908px;top:318px">文件长度</div>
 <div class="a" style="left:909px;top:354px;width:80px;height:32px;background:#fff;border:1px solid #e2e2e2;border-bottom:2px solid #a8a8a8"></div>
 <div class="t" style="left:913px;top:361px;font-size:16px;letter-spacing:-0.3px">50000</div>
 <div class="a" style="left:967px;top:354px;width:22px;height:32px;background:#e6e6e6;border:1px solid #c6c6c6;border-bottom:2px solid #b0b0b0"></div>
 <div class="a" style="left:968px;top:356px;width:19px;height:14px;background:#ececec;border:1px solid #d0d0d0"></div>
 <div class="a" style="left:968px;top:371px;width:19px;height:12px;background:#ececec;border:1px solid #d0d0d0"></div>
 <svg class="a" style="left:974px;top:361px" width="8" height="19"><path d="M0 4.5L4 0.5L8 4.5z" fill="#111"/><path d="M0 13L4 17L8 13z" fill="#111"/></svg>
 <div class="t" style="left:991px;top:368px;font-size:16px">MB</div>
 <div class="t" style="left:908px;top:418px">数据模式</div>
 <div class="combo" style="left:909px;top:446px;width:109px;height:31px"></div>
 <div class="t" style="left:913px;top:455px">零</div>
 <svg class="a" style="left:1001px;top:459px" width="12" height="8"><path d="M1 1.5L6 6L11 1.5" stroke="#707070" fill="none" stroke-width="1.1"/></svg>
 <div class="a" style="left:1032px;top:116px;width:14px;height:484px;background:#f0f0f0"></div>
 <div class="a" style="left:0;top:599px;width:1047px;height:1px;background:#e4e4e4"></div>
 <div class="t" style="left:914px;top:598px;z-index:0">块大小测试</div>
</div></div>
</body></html>
